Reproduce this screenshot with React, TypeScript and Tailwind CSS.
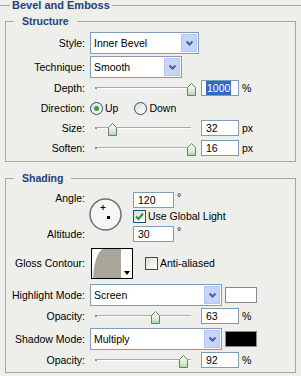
import React from 'react';

const LINE = 'border-[#a6a69d]';

function Label({ text, className = '' }: { text: string; className?: string }) {
  return <div className={`w-[79px] shrink-0 text-right whitespace-nowrap ${className}`}>{text}</div>;
}

function Chevron() {
  return (
    <svg width="9" height="6" viewBox="0 0 9 6">
      <path d="M1.5 1.5 L4.5 4.5 L7.5 1.5" fill="none" stroke="#4d6185" strokeWidth="2" />
    </svg>
  );
}

function Select({ value, width }: { value: string; width: string }) {
  return (
    <div className={`${width} ml-[5px] h-[22px] shrink-0 border border-[#7f9db9] bg-white flex items-center`}>
      <span className="flex-1 pl-[3px]">{value}</span>
      <div className="w-[16px] h-[18px] mr-[1px] bg-[#c5d4fb] border border-[#b4c5f0] flex items-center justify-center">
        <Chevron />
      </div>
    </div>
  );
}

function Thumb({ left }: { left: number }) {
  return (
    <svg className="absolute top-[3px]" style={{ left }} width="9" height="13" viewBox="0 0 9 13">
      <defs>
        <linearGradient id="thumbfill" x1="0" y1="0" x2="0" y2="1">
          <stop offset="0" stopColor="#f7fbf6" />
          <stop offset="0.6" stopColor="#dcefd9" />
          <stop offset="1" stopColor="#a9d3a3" />
        </linearGradient>
      </defs>
      <path d="M0.5 12.5 L0.5 4.5 L4.5 0.5 L8.5 4.5 L8.5 12.5 Z" fill="url(#thumbfill)" stroke="#6b7f6a" />
    </svg>
  );
}

function Slider({ pct }: { pct: number }) {
  const left = Math.round(5 + pct * 96 - 4);
  return (
    <div className="relative w-[111px] h-[16px] ml-[5px] shrink-0">
      <div className="ml-[5px] mt-[7px] w-[96px] flex">
        <div className="w-[2px] h-[2px] bg-[#8c8c8c]" />
        <div className="flex-1 border-t border-t-[#a9a9a9] border-b border-b-white" />
      </div>
      <Thumb left={left} />
    </div>
  );
}

function Field({ value, width = 'w-[38px]', selected = false }: { value: string; width?: string; selected?: boolean }) {
  return (
    <div className={`${width} h-[16px] shrink-0 border border-[#7f9db9] bg-white flex items-center pl-[4px]`}>
      {selected ? (
        <span className="bg-[#316ac5] text-white h-[14px] leading-[14px] px-[1px]">{value}</span>
      ) : (
        <span className="leading-[14px]">{value}</span>
      )}
    </div>
  );
}

function SliderRow({ label, pct, value, unit, selected, className }: { label: string; pct: number; value: string; unit: string; selected?: boolean; className: string }) {
  return (
    <div className={`flex items-center h-[16px] ${className}`}>
      <Label text={label} />
      <Slider pct={pct} />
      <Field value={value} selected={selected} />
      <span className="ml-[3px]">{unit}</span>
    </div>
  );
}

function Radio({ checked }: { checked?: boolean }) {
  return (
    <div className="w-[13px] h-[13px] rounded-full border border-[#1c5180] bg-gradient-to-br from-[#dcdcd5] to-white flex items-center justify-center shrink-0">
      {checked && <div className="w-[5px] h-[5px] rounded-full bg-[#3a9d3a]" />}
    </div>
  );
}

function Checkbox({ checked }: { checked?: boolean }) {
  return (
    <div className="w-[13px] h-[13px] border border-[#1c5180] bg-gradient-to-br from-[#dcdcd5] to-white flex items-center justify-center shrink-0">
      {checked && (
        <svg width="9" height="9" viewBox="0 0 9 9">
          <path d="M1 4.5 L3.5 7 L8 1.5" fill="none" stroke="#21a121" strokeWidth="2" />
        </svg>
      )}
    </div>
  );
}

function Group({ title, className, children }: { title: string; className: string; children: React.ReactNode }) {
  return (
    <fieldset className={`ml-[5px] w-[291px] border ${LINE} ${className}`}>
      <legend className="ml-[8px] px-[8px] h-[13px] leading-[13px] font-bold text-[10.5px] text-[#21427a]">{title}</legend>
      {children}
    </fieldset>
  );
}

export default function App() {
  return (
    <div className="w-[301px] h-[376px] bg-[#eeeeeb] text-black text-[10.5px] leading-[13px] font-['Liberation_Sans',Arial,sans-serif] overflow-hidden">
      <div className="flex items-center h-[11px]">
        <div className="w-[10px] h-px bg-[#a6a69d]" />
        <span className="px-[2px] font-bold text-[11px] text-[#21427a]">Bevel and Emboss</span>
        <div className="flex-1 h-px bg-[#a6a69d]" />
      </div>

      <Group title="Structure" className="mt-[4px] pb-[5px]">
        <div className="flex items-center mt-[4px] h-[22px]">
          <Label text="Style:" />
          <Select value="Inner Bevel" width="w-[109px]" />
        </div>
        <div className="flex items-center mt-[2px] h-[22px]">
          <Label text="Technique:" />
          <Select value="Smooth" width="w-[92px]" />
        </div>
        <SliderRow label="Depth:" pct={1} value="1000" unit="%" selected className="mt-[2px]" />
        <div className="flex items-center mt-[6px] h-[13px]">
          <Label text="Direction:" />
          <div className="ml-[5px] flex items-center">
            <Radio checked />
            <span className="ml-[2px]">Up</span>
            <div className="ml-[16px]"><Radio /></div>
            <span className="ml-[2px]">Down</span>
          </div>
        </div>
        <SliderRow label="Size:" pct={0.18} value="32" unit="px" className="mt-[5px]" />
        <SliderRow label="Soften:" pct={1} value="16" unit="px" className="mt-[4px]" />
      </Group>

      <Group title="Shading" className="mt-[10px] pb-[4px]">
        <div className="flex items-start mt-[7px]">
          <div className="w-[79px] shrink-0 text-right">
            <div className="h-[12px] leading-[12px]">Angle:</div>
            <div className="mt-[24px] h-[12px] leading-[12px]">Altitude:</div>
          </div>
          <svg className="ml-[4px] mt-[6px] shrink-0" width="33" height="33" viewBox="0 0 33 33">
            <circle cx="16.5" cy="16.5" r="15.5" fill="#f6f6f4" stroke="#6f6f78" strokeWidth="1.5" />
            <path d="M14 7 V12 M11.5 9.5 H16.5" stroke="#000" strokeWidth="1" />
            <rect x="18" y="18" width="3" height="3" fill="#000" />
          </svg>
          <div className="ml-[11px] flex flex-col">
            <div className="flex items-start">
              <Field value="120" width="w-[41px]" />
              <span className="ml-[3px] leading-[10px]">°</span>
            </div>
            <div className="flex items-center mt-[2px] h-[13px]">
              <Checkbox checked />
              <span className="ml-[2px]">Use Global Light</span>
            </div>
            <div className="flex items-start mt-[3px]">
              <Field value="30" width="w-[41px]" />
              <span className="ml-[3px] leading-[10px]">°</span>
            </div>
          </div>
        </div>

        <div className="flex items-center mt-[6px]">
          <Label text="Gloss Contour:" />
          <div className="ml-[6px] w-[42px] h-[31px] border border-black bg-white flex shrink-0">
            <svg width="29" height="29" viewBox="0 0 29 29">
              <path d="M1 29 C 2 12, 6 2, 11 0 L29 0 L29 29 Z" fill="#aaa69a" />
            </svg>
            <div className="flex-1 flex items-end justify-center pb-[3px]">
              <svg width="6" height="4" viewBox="0 0 6 4">
                <path d="M0 0 H6 L3 4 Z" fill="#000" />
              </svg>
            </div>
          </div>
          <div className="ml-[12px]"><Checkbox /></div>
          <span className="ml-[2px]">Anti-aliased</span>
        </div>

        <div className="flex items-center mt-[5px] h-[22px]">
          <Label text="Highlight Mode:" />
          <Select value="Screen" width="w-[132px]" />
          <div className="ml-[3px] w-[32px] h-[16px] border border-[#8a8a8a] bg-white" />
        </div>
        <SliderRow label="Opacity:" pct={0.63} value="63" unit="%" className="mt-[2px]" />
        <div className="flex items-center mt-[4px] h-[22px]">
          <Label text="Shadow Mode:" />
          <Select value="Multiply" width="w-[132px]" />
          <div className="ml-[3px] w-[32px] h-[16px] border border-[#8a8a8a] bg-black" />
        </div>
        <SliderRow label="Opacity:" pct={0.92} value="92" unit="%" className="mt-[2px]" />
      </Group>
    </div>
  );
}
